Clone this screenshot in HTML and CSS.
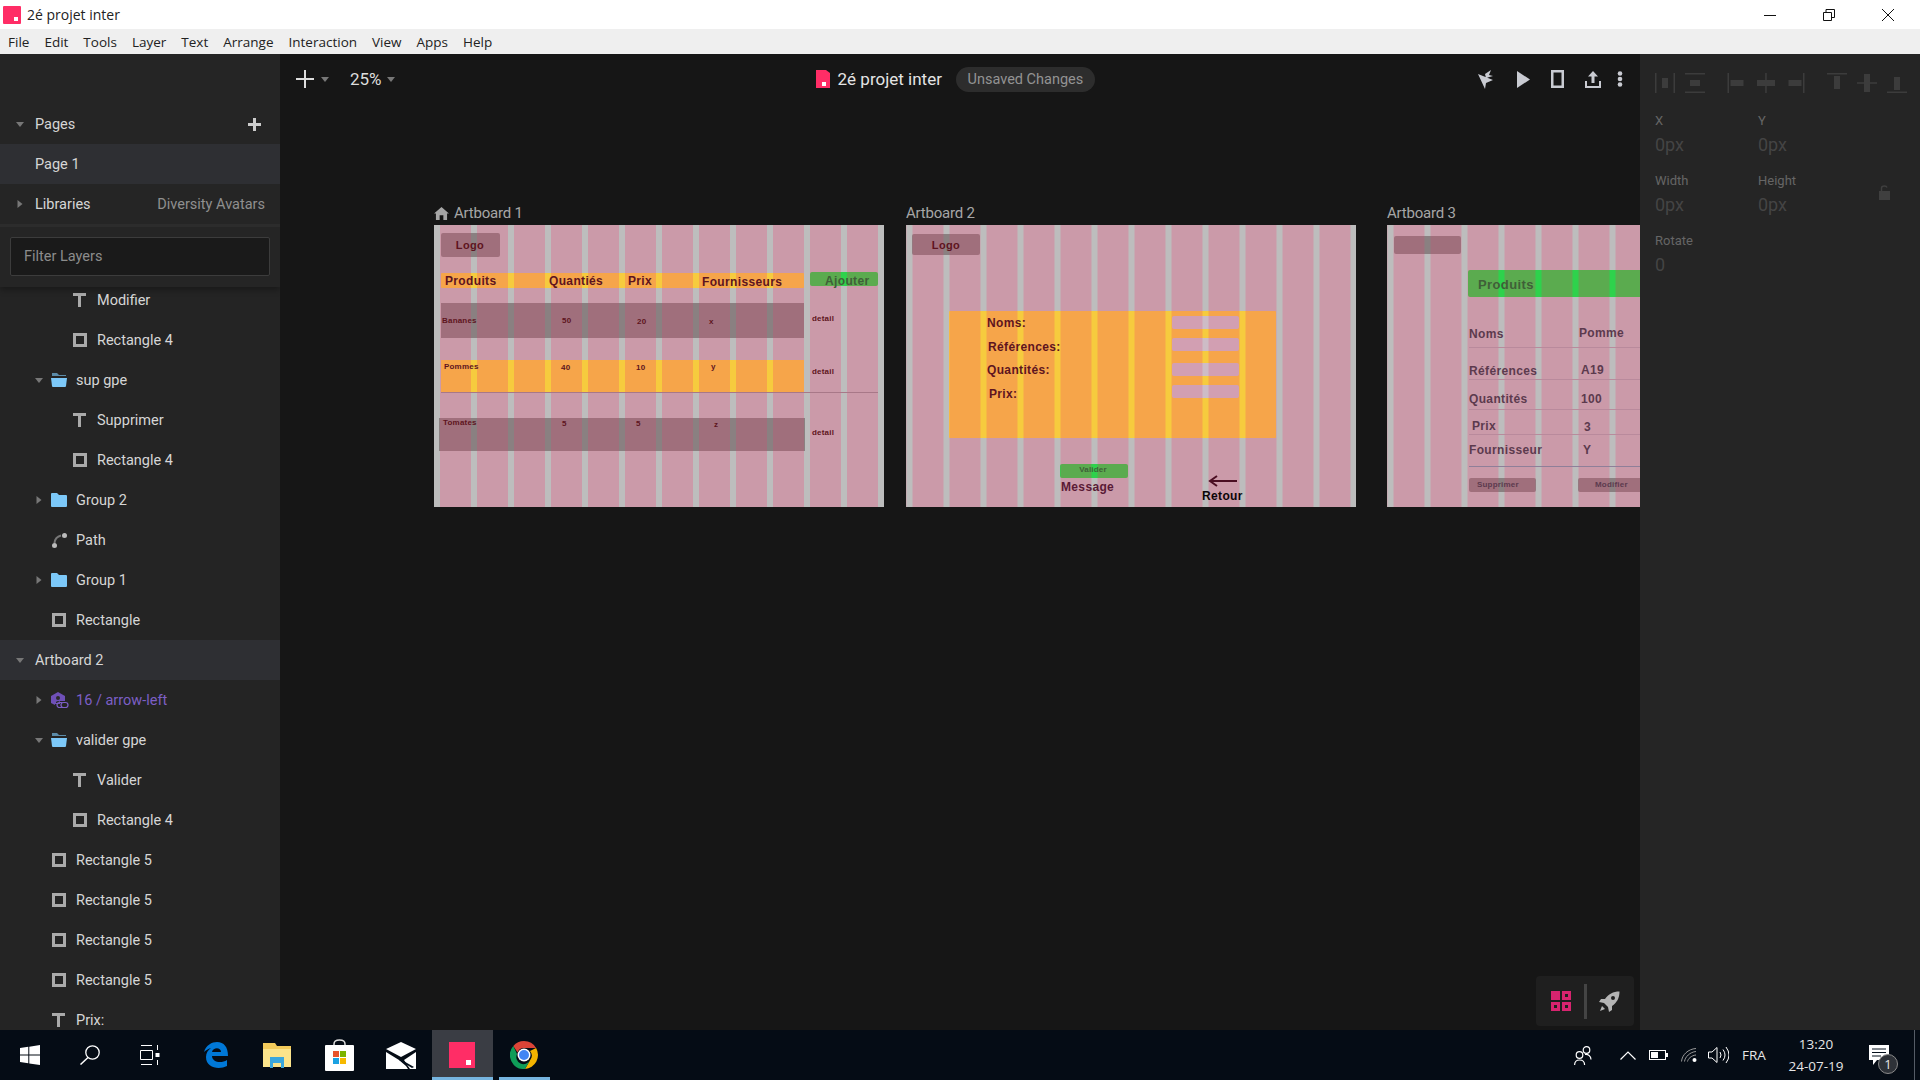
FILE: index.html
```html
<!DOCTYPE html>
<html lang="fr">
<head>
<meta charset="utf-8">
<title>2é projet inter</title>
<link rel="stylesheet" href="styles.css">
</head>
<body>
<svg class="defs" aria-hidden="true">
  <symbol id="t" viewBox="0 0 13 14"><path d="M0 0h13v3H8v11H5V3H0z"/></symbol>
  <symbol id="r" viewBox="0 0 14 14"><path fill-rule="evenodd" d="M0 0h14v14H0zM3 3v8h8V3z"/></symbol>
  <symbol id="fold" viewBox="0 0 16 14"><path d="M0 1q0-1 1-1h5l2 2h7q1 0 1 1v10q0 1-1 1H1q-1 0-1-1z"/></symbol>
  <symbol id="fopen" viewBox="0 0 16 14"><path fill="#5b8ba8" d="M1 0h5l2 2h7v1H1z"/><path d="M0 5h16l-1 8q0 1-1 1H2q-1 0-1-1z"/></symbol>
  <symbol id="down" viewBox="0 0 8 5"><path d="M0 0h8L4 5z"/></symbol>
  <symbol id="right" viewBox="0 0 5 8"><path d="M0 0l5 4-5 4z"/></symbol>
</svg>

<header class="titlebar">
  <svg class="applogo" viewBox="0 0 18 18"><rect width="18" height="18" rx="1" fill="#ff2d66"/><rect x="11" y="11" width="4" height="4" fill="#fff"/></svg>
  <span class="apptitle">2é projet inter</span>
  <div class="winctl">
    <svg viewBox="0 0 12 12"><path d="M0 6.500h12" stroke="#111" fill="none"/></svg>
    <svg viewBox="0 0 12 12"><path d="M.5 3.500h8v8h-8zM3 3.500V.5h8.500v8H8.500" stroke="#111" fill="none"/></svg>
    <svg viewBox="0 0 12 12"><path d="M0 0l12 12M12 0L0 12" stroke="#111" fill="none"/></svg>
  </div>
</header>
<nav class="menubar">
  <span>File</span><span>Edit</span><span>Tools</span><span>Layer</span><span>Text</span><span>Arrange</span><span>Interaction</span><span>View</span><span>Apps</span><span>Help</span>
</nav>

<div class="main">
  <aside class="sidebar">
    <div class="sidehead">
      <div class="row l0"><svg class="cv"><use href="#down"/></svg><span>Pages</span>
        <svg class="plus" viewBox="0 0 13 13"><path d="M5 0h3v5h5v3H8v5H5V8H0V5h5z"/></svg></div>
      <div class="row l0 sel"><i class="cv"></i><span>Page 1</span></div>
      <div class="row l0 libs"><svg class="cvr"><use href="#right"/></svg><span>Libraries</span><em>Diversity Avatars</em></div>
      <div class="filter"><div class="filterbox">Filter Layers</div></div>
    </div>
    <div class="layers">
      <div class="row l2"><svg class="ic t"><use href="#t"/></svg><span>Modifier</span></div>
      <div class="row l2"><svg class="ic r"><use href="#r"/></svg><span>Rectangle 4</span></div>
      <div class="row l1"><svg class="cv"><use href="#down"/></svg><svg class="ic f"><use href="#fopen"/></svg><span>sup gpe</span></div>
      <div class="row l2"><svg class="ic t"><use href="#t"/></svg><span>Supprimer</span></div>
      <div class="row l2"><svg class="ic r"><use href="#r"/></svg><span>Rectangle 4</span></div>
      <div class="row l1"><svg class="cvr"><use href="#right"/></svg><svg class="ic f"><use href="#fold"/></svg><span>Group 2</span></div>
      <div class="row l1"><i class="cv"></i><svg class="ic p" viewBox="0 0 15 15"><circle cx="12.500" cy="2.500" r="2.500" fill="#bbb"/><circle cx="2.500" cy="12.500" r="2.500" fill="#bbb"/><path d="M2.500 10Q3 4 9 2.500" stroke="#777" stroke-width="2" fill="none"/></svg><span>Path</span></div>
      <div class="row l1"><svg class="cvr"><use href="#right"/></svg><svg class="ic f"><use href="#fold"/></svg><span>Group 1</span></div>
      <div class="row l1"><i class="cv"></i><svg class="ic r"><use href="#r"/></svg><span>Rectangle</span></div>
      <div class="row l0 sel"><svg class="cv"><use href="#down"/></svg><span>Artboard 2</span></div>
      <div class="row l1 comp"><svg class="cvr"><use href="#right"/></svg><svg class="ic c" viewBox="0 0 18 17"><path fill="#6f50b8" d="M7 0l7 4v5H9v3H4v1L0 11V4z"/><circle cx="7" cy="6" r="2" fill="#2a2a2a"/><path d="M5 10q2-2 4 0v1H5z" fill="#2a2a2a"/><rect x="6" y="10.500" width="7" height="5" rx="2.500" fill="none" stroke="#7d5fc6" stroke-width="1.200"/><rect x="10" y="10.500" width="7" height="5" rx="2.500" fill="#242424" stroke="#7d5fc6" stroke-width="1.200"/></svg><span>16 / arrow-left</span></div>
      <div class="row l1"><svg class="cv"><use href="#down"/></svg><svg class="ic f"><use href="#fopen"/></svg><span>valider gpe</span></div>
      <div class="row l2"><svg class="ic t"><use href="#t"/></svg><span>Valider</span></div>
      <div class="row l2"><svg class="ic r"><use href="#r"/></svg><span>Rectangle 4</span></div>
      <div class="row l1"><i class="cv"></i><svg class="ic r"><use href="#r"/></svg><span>Rectangle 5</span></div>
      <div class="row l1"><i class="cv"></i><svg class="ic r"><use href="#r"/></svg><span>Rectangle 5</span></div>
      <div class="row l1"><i class="cv"></i><svg class="ic r"><use href="#r"/></svg><span>Rectangle 5</span></div>
      <div class="row l1"><i class="cv"></i><svg class="ic r"><use href="#r"/></svg><span>Rectangle 5</span></div>
      <div class="row l1"><i class="cv"></i><svg class="ic t"><use href="#t"/></svg><span>Prix:</span></div>
    </div>
  </aside>

  <section class="canvas">
    <div class="topbar">
      <svg class="addicon" viewBox="0 0 18 18"><path d="M8 0h2v8h8v2h-8v8H8v-8H0V8h8z"/></svg>
      <svg class="caret c1"><use href="#down"/></svg>
      <span class="zoom">25%</span>
      <svg class="caret c2"><use href="#down"/></svg>
      <svg class="doclogo" viewBox="0 0 14 18"><path fill="#ff2d66" d="M0 0h10l4 3v15H0z"/><rect x="6" y="12" width="4" height="4" fill="#fff"/></svg>
      <span class="docname">2é projet inter</span>
      <span class="pill">Unsaved Changes</span>
      <div class="actions">
        <svg class="a1" viewBox="0 0 16 19"><path d="M0 4l15 6-7 3-1 6zM7 4l6-4-2 5 4 1-7 2z"/></svg>
        <svg class="a2" viewBox="0 0 13 17"><path d="M0 0l13 8.500L0 17z"/></svg>
        <svg class="a3" viewBox="0 0 13 18"><path fill-rule="evenodd" d="M0 0h13v18H0zM2.500 2.500v13h8v-13z"/></svg>
        <svg class="a4" viewBox="0 0 16 17"><path d="M8 0l5 5.500h-3.500V12h-3V5.500H3zM0 10h2v5h12v-5h2v7H0z"/></svg>
        <svg class="a5" viewBox="0 0 6 16"><circle cx="3" cy="2.500" r="2.300"/><circle cx="3" cy="8" r="2.300"/><circle cx="3" cy="13.500" r="2.300"/></svg>
      </div>
    </div>

    <!-- Artboard 1 -->
    <div class="ablabel al1"><svg viewBox="0 0 16 14"><path d="M8 0l8 7h-2v7h-4V9H6v5H2V7H0z"/></svg>Artboard 1</div>
    <div class="board b1 g pink">
      <div class="el g dark a1logo"></div>
      <div class="el g orange a1head"></div>
      <div class="el g green a1add"></div>
      <div class="el g dark a1r1"></div>
      <div class="el g orange a1r2"></div>
      <div class="el a1line"></div>
      <div class="el g dark a1r3"></div>
      <span class="tx h11 cen" style="--x:36px;--y:20px">Logo</span>
      <span class="tx h12" style="--x:11px;--y:56px">Produits</span>
      <span class="tx h12" style="--x:115px;--y:56px">Quantiés</span>
      <span class="tx h12" style="--x:194px;--y:56px">Prix</span>
      <span class="tx h12" style="--x:268px;--y:57px">Fournisseurs</span>
      <span class="tx h12 dk" style="--x:391px;--y:56px">Ajouter</span>
      <span class="tx h8" style="--x:8px;--y:96px">Bananes</span>
      <span class="tx h8" style="--x:128px;--y:96px">50</span>
      <span class="tx h8" style="--x:203px;--y:97px">20</span>
      <span class="tx h8" style="--x:275px;--y:97px">x</span>
      <span class="tx h8" style="--x:378px;--y:94px">detail</span>
      <span class="tx h8" style="--x:10px;--y:142px">Pommes</span>
      <span class="tx h8" style="--x:127px;--y:143px">40</span>
      <span class="tx h8" style="--x:202px;--y:143px">10</span>
      <span class="tx h8" style="--x:277px;--y:142px">y</span>
      <span class="tx h8" style="--x:378px;--y:147px">detail</span>
      <span class="tx h8" style="--x:9px;--y:198px">Tomates</span>
      <span class="tx h8" style="--x:128px;--y:199px">5</span>
      <span class="tx h8" style="--x:202px;--y:199px">5</span>
      <span class="tx h8" style="--x:280px;--y:200px">z</span>
      <span class="tx h8" style="--x:378px;--y:208px">detail</span>
    </div>

    <!-- Artboard 2 -->
    <div class="ablabel al2">Artboard 2</div>
    <div class="board b2 g pink">
      <div class="el g dark a2logo"></div>
      <div class="el g orange a2panel"></div>
      <div class="el g inp a2i1"></div>
      <div class="el g inp a2i2"></div>
      <div class="el g inp a2i3"></div>
      <div class="el g inp a2i4"></div>
      <div class="el g green a2val"></div>
      <span class="tx h11 cen" style="--x:40px;--y:20px">Logo</span>
      <span class="tx h12" style="--x:81px;--y:98px">Noms:</span>
      <span class="tx h12" style="--x:82px;--y:122px">Références:</span>
      <span class="tx h12" style="--x:81px;--y:145px">Quantités:</span>
      <span class="tx h12" style="--x:83px;--y:169px">Prix:</span>
      <span class="tx h8 cen dk" style="--x:187px;--y:245px">Valider</span>
      <span class="tx h12 plum" style="--x:155px;--y:262px">Message</span>
      <svg class="a2arrow" viewBox="0 0 29 12"><path d="M29 6H3M9 1L2 6l7 5" fill="none" stroke="#4a0e22" stroke-width="2"/></svg>
      <span class="tx h12 blk" style="--x:296px;--y:271px">Retour</span>
    </div>

    <!-- Artboard 3 -->
    <div class="ablabel al3">Artboard 3</div>
    <div class="board b3 g pink">
      <div class="el g dark a3logo"></div>
      <div class="el g green a3head"></div>
      <div class="el a3line l1p"></div>
      <div class="el a3line l2p"></div>
      <div class="el a3line l3p"></div>
      <div class="el a3line l4p"></div>
      <div class="el a3line l5p"></div>
      <div class="el g dark a3b1"></div>
      <div class="el g dark a3b2"></div>
      <span class="tx h13 dk" style="--x:91px;--y:59px">Produits</span>
      <span class="tx h12 mut" style="--x:82px;--y:109px">Noms</span>
      <span class="tx h12 mut" style="--x:192px;--y:108px">Pomme</span>
      <span class="tx h12 mut" style="--x:82px;--y:146px">Références</span>
      <span class="tx h12 mut" style="--x:194px;--y:145px">A19</span>
      <span class="tx h12 mut" style="--x:82px;--y:174px">Quantités</span>
      <span class="tx h12 mut" style="--x:194px;--y:174px">100</span>
      <span class="tx h12 mut" style="--x:85px;--y:201px">Prix</span>
      <span class="tx h12 mut" style="--x:197px;--y:202px">3</span>
      <span class="tx h12 mut" style="--x:82px;--y:225px">Fournisseur</span>
      <span class="tx h12 mut" style="--x:196px;--y:225px">Y</span>
      <span class="tx h8 mut" style="--x:90px;--y:260px">Supprimer</span>
      <span class="tx h8 mut" style="--x:208px;--y:260px">Modifier</span>
    </div>

    <div class="floater">
      <svg class="gridicon" viewBox="0 0 20 20"><path fill="#d8246f" fill-rule="evenodd" d="M0 0h9v9H0zM11 0h9v9h-9zM14 3v3h3V3zM0 11h9v9H0zM3 14v3h3v-3zM11 11h9v9h-9zM14 14v3h3v-3z"/></svg>
      <i class="fsep"></i>
      <svg class="rocket" viewBox="0 0 21 21"><path fill="#b4b4b4" fill-rule="evenodd" d="M20.500.5C14 .5 9.500 3 6 8H2L0 11l5 1 4 4 1 5 3-2v-4c5-3.500 7.500-8 7.500-14.500zM14 5a2 2 0 1 1 0 4 2 2 0 0 1 0-4z"/><path fill="#b4b4b4" d="M3 15l3 3-5 2z"/></svg>
    </div>
  </section>

  <aside class="props">
    <div class="aligns">
      <svg viewBox="0 0 20 20"><path d="M0 0h1.500v20H0zM18.500 0H20v20h-1.500zM7 5h6v10H7z"/></svg>
      <svg viewBox="0 0 20 20"><path d="M0 0h20v1.500H0zM0 18.500h20V20H0zM5 7h10v6H5z"/></svg>
      <svg class="gapl" viewBox="0 0 17 20"><path d="M0 0h1.500v20H0zM3 7h13v6H3z"/></svg>
      <svg viewBox="0 0 18 20"><path d="M8.200 0h1.500v20H8.200zM0 7h18v6H0z"/></svg>
      <svg viewBox="0 0 17 20"><path d="M15.500 0H17v20h-1.500zM1 7h13v6H1z"/></svg>
      <svg class="gapl" viewBox="0 0 20 20"><path d="M0 0h20v1.500H0zM7 3h6v13H7z"/></svg>
      <svg viewBox="0 0 20 20"><path d="M0 9.200h20v1.500H0zM7 1h6v18H7z"/></svg>
      <svg viewBox="0 0 20 20"><path d="M0 18.500h20V20H0zM7 4h6v13H7z"/></svg>
    </div>
    <div class="fields">
      <div class="field"><label>X</label><b>0px</b></div>
      <div class="field"><label>Y</label><b>0px</b></div>
      <div class="field"><label>Width</label><b>0px</b></div>
      <div class="field"><label>Height</label><b>0px</b>
        <svg class="lock" viewBox="0 0 11 15"><path fill="#3f3f3f" d="M0 6h11v9H0z"/><path fill="none" stroke="#3f3f3f" stroke-width="1.500" d="M2.500 6V3q0-2 3-2 2 0 2.500 1.500"/></svg></div>
      <div class="field"><label>Rotate</label><b>0</b></div>
    </div>
  </aside>
</div>

<footer class="taskbar">
  <div class="tb sys"><svg class="i20" viewBox="0 0 20 20"><path fill="#fff" d="M0 3l8.300-1.200v7.800H0zM9.300 1.700L20 0v9.600H9.300zM0 10.500h8.300v7.800L0 17zM9.300 10.500H20V20L9.300 18.400z"/></svg></div>
  <div class="tb sys"><svg class="i20" viewBox="0 0 20 20"><circle cx="12.500" cy="7.500" r="6.700" fill="none" stroke="#fff" stroke-width="1.300"/><path d="M8 12.500L.5 19.500" stroke="#fff" stroke-width="1.500"/></svg></div>
  <div class="tb sys sysl"><svg class="i20" viewBox="0 0 20 20"><path d="M1 .5h11M1 19.500h11M.5 5.500h12v9H.5zM17.500 0v5M17.500 15v5" fill="none" stroke="#fff"/><rect x="15.500" y="8" width="4" height="4" fill="#fff"/></svg></div>
  <div class="tb app"><svg class="edge" viewBox="0 0 25 26"><path fill="#0078d7" d="M1 10C3 3 9 0 14 0c7 0 11 5 11 14H9c0 6 9 8 15 4v6c-8 4-21 2-21-9 0-4 2-7 5-9-3 1-5 2-7 4zM9 10h9c0-5-8-5-9 0z"/></svg></div>
  <div class="tb app"><svg class="explorer" viewBox="0 0 28 26"><path fill="#f3cb5b" d="M0 1h12l2 3h14v21H0z"/><path fill="#fbe48b" d="M0 7h28v18H0z"/><path fill="#3aa7dd" d="M7 15h14v11h-3v-5h-8v5H7z"/></svg></div>
  <div class="tb app"><svg class="store" viewBox="0 0 29 32"><path fill="none" stroke="#ddd" stroke-width="1.500" d="M9 8V5q0-4 5.500-4T20 5v3"/><rect y="6" width="29" height="26" rx="1" fill="#fff"/><rect x="8" y="12" width="6" height="6" fill="#e8542c"/><rect x="15" y="12" width="6" height="6" fill="#7bb300"/><rect x="8" y="19" width="6" height="6" fill="#1ba1e2"/><rect x="15" y="19" width="6" height="6" fill="#f6b900"/></svg></div>
  <div class="tb app"><svg class="mail" viewBox="0 0 30 27"><path fill="#fff" d="M0 7l15-7 15 7-15 8zM0 10l13 8 7 6 2 3H0zM30 10v17h-6l-6-9z"/><path fill="#05101c" d="M14 17l14 8-2 1-13-8z"/></svg></div>
  <div class="tb app on"><svg class="studio" viewBox="0 0 26 26"><rect width="26" height="26" fill="#ff2d66"/><rect x="17" y="18" width="5" height="5" fill="#fff"/></svg></div>
  <div class="tb app run"><svg class="chrome" viewBox="0 0 28 28"><path fill="#db4437" d="M14 0a14 14 0 0 1 12.100 7H14a7 7 0 0 0-6.500 4.400L3.300 5A14 14 0 0 1 14 0z"/><path fill="#f4b400" d="M26.100 7A14 14 0 0 1 15 28l5.500-9.500A7 7 0 0 0 20 10z"/><path fill="#0f9d58" d="M3.300 5A14 14 0 0 0 15 28l5-9a7 7 0 0 1-13-6z"/><circle cx="14" cy="14" r="6.500" fill="#fff"/><circle cx="14" cy="14" r="5" fill="#4285f4"/></svg></div>
  <div class="tray">
    <svg class="people" viewBox="0 0 18 19"><g fill="none" stroke="#fff" stroke-width="1.200"><circle cx="12.500" cy="4" r="3.300"/><circle cx="5.500" cy="9" r="3.300"/><path d="M.6 19c0-3 2-5 5-5s5 2 5 5M11 8.500c3-.5 6 1.500 6 5"/></g></svg>
    <svg class="chev" viewBox="0 0 16 9"><path d="M.5 8.500L8 1l7.500 7.500" fill="none" stroke="#fff" stroke-width="1.200"/></svg>
    <svg class="batt" viewBox="0 0 19 10"><rect x=".5" y=".5" width="16" height="9" fill="none" stroke="#fff"/><rect x="2" y="2" width="7" height="6" fill="#fff"/><rect x="17" y="3" width="2" height="4" fill="#fff"/></svg>
    <svg class="wifi" viewBox="0 0 16 14"><g fill="none" stroke="#999"><path d="M.5 13.500C1 7 7 1 15 .5M3.500 13.500C4 9 9 4 15 3.500"/><path d="M6.500 13.500C7 11 10 7.500 15 7"/></g><circle cx="13.500" cy="12" r="2" fill="#fff"/></svg>
    <svg class="vol" viewBox="0 0 21 18"><path d="M.5 6h3.500L9 1.500v15L4 12H.5zM12 6q2 3 0 6M15 3.500q4 5.500 0 11M18 1q6 8 0 16" fill="none" stroke="#fff"/></svg>
    <span class="lang">FRA</span>
    <div class="clock"><span>13:20</span><span>24-07-19</span></div>
    <div class="notif"><svg viewBox="0 0 20 20"><path fill="#fff" d="M0 0h20v15H8l-4 5v-5H0z"/><path d="M3 4h14M3 7.500h14M3 11h9" stroke="#05101c"/></svg><span class="badge">1</span></div>
    <i class="showdesk"></i>
  </div>
</footer>
</body>
</html>
```

FILE: styles.css
```css
* { box-sizing: border-box; }
html, body { margin: 0; height: 100%; overflow: hidden; }
body {
  display: flex; flex-direction: column; height: 100vh;
  font-family: Roboto, "Liberation Sans", sans-serif; color: #d6d6d6; background: #161616;
}
.defs { position: absolute; width: 0; height: 0; }

/* window chrome */
.titlebar { height: 29px; flex: none; background: #fff; display: flex; align-items: center; padding-left: 3px; }
.applogo { width: 18px; height: 18px; }
.apptitle { margin-left: 6px; font: 14px "Open Sans", sans-serif; color: #222; }
.winctl { margin-left: auto; display: flex; padding-right: 26px; gap: 47px; }
.winctl svg { width: 12px; height: 12px; }
.menubar { height: 25px; flex: none; background: #efefef; display: flex; align-items: center; gap: 15px; padding-left: 8px; font: 13.500px "Open Sans", sans-serif; color: #222; }

.main { flex: 1; min-height: 0; display: flex; }

/* left panel */
.sidebar { width: 280px; flex: none; background: #242424; display: flex; flex-direction: column; overflow: hidden; font-size: 14.500px; }
.sidehead { padding-top: 50px; background: #252525; position: relative; z-index: 1; box-shadow: 0 3px 6px rgba(0,0,0,.3); flex: none; }
.row { height: 40px; display: flex; align-items: center; flex: none; white-space: nowrap; }
.l0 { padding-left: 16px; }
.l0 .cv, .l0 .cvr { margin-right: 11px; }
.l1 { padding-left: 35px; }
.l1 .cv, .l1 .cvr { margin-right: 9px; }
.l2 { padding-left: 73px; }
.cv { width: 8px; height: 5px; fill: #777; flex: none; display: block; }
.cvr { width: 8px; height: 8px; fill: #777; flex: none; }
.ic { flex: none; margin-right: 10px; }
.ic.t { width: 13px; height: 14px; fill: #aaa; margin-right: 11px; }
.ic.r { width: 14px; height: 14px; fill: #aaa; }
.ic.f { width: 16px; height: 14px; fill: #7cc8f8; margin-right: 9px; margin-left: -1px; }
.ic.p { width: 15px; height: 15px; margin-right: 9px; }
.ic.c { width: 18px; height: 17px; margin-right: 7px; margin-left: -1px; }
.sel { background: #2e2f33; }
.plus { width: 13px; height: 13px; fill: #ccc; margin-left: auto; margin-right: 19px; }
.libs em { margin-left: auto; margin-right: 15px; font-style: normal; color: #8f8f8f; }
.filter { border-top: 3px solid #2c2c2c; padding: 10px 10px 11px; }
.filterbox { height: 39px; background: #1a1a1a; border: 1px solid #3c3c3c; border-radius: 2px; padding-left: 13px; line-height: 37px; color: #8c8c8c; }
.layers { margin-top: -7px; flex: none; }
.comp span { color: #7d5fc6; }

/* canvas */
.canvas { flex: 1; min-width: 0; position: relative; overflow: hidden; background: #161616; }
.topbar { height: 50px; display: flex; align-items: center; padding-left: 16px; }
.addicon { width: 18px; height: 18px; fill: #ddd; flex: none; }
.caret { width: 8px; height: 5px; fill: #777; flex: none; }
.c1 { margin-left: 7px; }
.c2 { margin-left: 5px; }
.zoom { margin-left: 21px; font-size: 17px; color: #ddd; }
.doclogo { width: 14px; height: 18px; margin-left: 421px; flex: none; }
.docname { margin-left: 8px; font-size: 17px; color: #e4e4e4; }
.pill { margin-left: 14px; height: 25px; width: 139px; border-radius: 13px; background: #2d2d2d; color: #939393; font-size: 14.500px; line-height: 25px; text-align: center; }
.actions { margin-left: auto; display: flex; align-items: center; padding-right: 17px; fill: #c9cbd2; }
.a1 { width: 16px; height: 19px; }
.a2 { width: 13px; height: 17px; margin-left: 23px; }
.a3 { width: 13px; height: 18px; margin-left: 21px; }
.a4 { width: 16px; height: 17px; margin-left: 21px; }
.a5 { width: 6px; height: 16px; margin-left: 16px; }

.ablabel { position: absolute; top: 150px; font-size: 15px; line-height: 18px; color: #a6a6a6; letter-spacing: -.2px; display: flex; align-items: center; gap: 5px; }
.ablabel svg { width: 15px; height: 13px; fill: #a6a6a6; }
.al1 { left: 154px; }
.al2 { left: 626px; }
.al3 { left: 1107px; }

/* the artboards sit on a free canvas; their grid overlay is aligned to the viewport */
.board { position: absolute; top: 171px; height: 282px; width: 450px; font-family: "Liberation Sans", Arial, sans-serif; color: #5e1420; }
.b1 { left: 154px; --off: 434px; }
.b2 { left: 626px; --off: 906.500px; }
.b3 { left: 1107px; --off: 1387.500px; }
.g {
  background-image: linear-gradient(90deg, var(--gut) 0 6.500px, var(--base) 6.500px 37px);
  background-size: 37px 100vh;
  background-position: var(--off) 0;
  background-attachment: fixed;
}
.pink { --base: #cb9aa9; --gut: #bdbdbd; }
.dark { --base: #a06f7c; --gut: #8a8081; }
.orange { --base: #f6a54a; --gut: #f6cb3e; }
.green { --base: #5bab4f; --gut: #2ed24c; }
.inp { --base: #d29fb2; --gut: #cdbcc6; }
.el { position: absolute; }
.tx { position: absolute; left: var(--x); top: var(--y); transform: translateY(-50%); white-space: nowrap; font-weight: 700; line-height: 1; }
.cen { transform: translate(-50%, -50%); }
.h8 { font-size: 8px; letter-spacing: .2px; }
.h11 { font-size: 11px; letter-spacing: .4px; }
.h12 { font-size: 12px; letter-spacing: .35px; }
.h13 { font-size: 13px; letter-spacing: .4px; }
.dk { color: #3f5f38; }
.plum { color: #5a1a36; }
.blk { color: #0c0508; }
.mut { color: #5c3a4e; }

.a1logo { left: 7px; top: 8px; width: 59px; height: 24px; border-radius: 2px; }
.a1head { left: 7px; top: 48px; width: 363px; height: 15px; border-radius: 1px; }
.a1add { left: 376px; top: 47px; width: 68px; height: 14px; border-radius: 2px; }
.a1r1 { left: 7px; top: 78px; width: 363px; height: 35px; }
.a1r2 { left: 7px; top: 135px; width: 363px; height: 32px; }
.a1line { left: 7px; top: 167px; width: 437px; height: 1px; background: #a87888; }
.a1r3 { left: 5px; top: 193px; width: 366px; height: 33px; }

.a2logo { left: 6px; top: 9px; width: 68px; height: 21px; border-radius: 2px; }
.a2panel { left: 43px; top: 86px; width: 327px; height: 127px; border-radius: 1px; }
.a2i1, .a2i2, .a2i3, .a2i4 { left: 266px; width: 67px; height: 13px; border-radius: 2px; }
.a2i1 { top: 91px; }
.a2i2 { top: 113px; }
.a2i3 { top: 138px; }
.a2i4 { top: 160px; }
.a2val { left: 154px; top: 239px; width: 68px; height: 14px; border-radius: 2px; }
.a2arrow { position: absolute; left: 302px; top: 250px; width: 29px; height: 12px; }

.a3logo { left: 7px; top: 11px; width: 67px; height: 18px; border-radius: 2px; }
.a3head { left: 81px; top: 45px; width: 369px; height: 27px; border-radius: 2px; }
.a3line { left: 82px; width: 368px; height: 1px; background: #b98a9c; }
.l1p { top: 122px; }
.l2p { top: 154px; }
.l3p { top: 184px; }
.l4p { top: 209px; }
.l5p { top: 241px; background: #8f7f99; }
.a3b1 { left: 82px; top: 253px; width: 67px; height: 14px; border-radius: 2px; }
.a3b2 { left: 191px; top: 253px; width: 67px; height: 14px; border-radius: 2px; }

.floater { position: absolute; right: 6px; bottom: 4px; width: 98px; height: 50px; background: #1f1f1f; border-radius: 4px; display: flex; align-items: center; padding-left: 15px; }
.gridicon { width: 20px; height: 20px; }
.fsep { width: 3px; height: 35px; background: #444; margin-left: 13px; }
.rocket { width: 21px; height: 21px; margin-left: 12px; }

/* right panel */
.props { width: 280px; flex: none; background: #252525; padding: 19px 15px 0; }
.aligns { display: flex; height: 21px; gap: 10px; fill: #3c3c3c; }
.aligns svg { width: 20px; height: 20px; flex: none; }
.aligns .gapl { margin-left: 11px; }
.fields { display: grid; grid-template-columns: 103px 1fr; grid-auto-rows: 60px; margin-top: 19px; }
.field { display: flex; flex-direction: column; gap: 4px; position: relative; }
.field label { font-size: 13px; line-height: 16px; color: #666; }
.field b { font-size: 18px; font-weight: 400; line-height: 24px; color: #444; }
.lock { position: absolute; right: 15px; top: 12px; width: 11px; height: 15px; }

/* taskbar */
.taskbar { height: 50px; flex: none; background: #050c15; display: flex; align-items: stretch; color: #e6e6e6; }
.tb { display: flex; align-items: center; justify-content: center; flex: none; position: relative; }
.sys { width: 60px; }
.sysl { margin-right: 5px; }
.app { width: 61.670px; }
.i20 { width: 20px; height: 20px; }
.edge { width: 25px; height: 26px; }
.explorer { width: 28px; height: 26px; }
.store { width: 29px; height: 32px; }
.mail { width: 30px; height: 27px; }
.studio { width: 26px; height: 26px; }
.chrome { width: 28px; height: 28px; }
.on { background: #3a3d44; box-shadow: inset 0 -3px 0 #76b5e0; }
.run::after { content: ""; position: absolute; left: 6px; right: 5px; bottom: 0; height: 3px; background: #76b5e0; }
.tray { margin-left: auto; display: flex; align-items: center; padding-right: 5px; font: 14px "Open Sans", sans-serif; }
.people { width: 18px; height: 19px; }
.chev { width: 16px; height: 9px; margin-left: 28px; }
.batt { width: 19px; height: 10px; margin-left: 13px; }
.wifi { width: 16px; height: 14px; margin-left: 13px; }
.vol { width: 21px; height: 18px; margin-left: 11px; }
.lang { margin-left: 13px; font-size: 13.500px; width: 26px; }
.clock { width: 60px; margin-left: 18px; display: flex; flex-direction: column; align-items: center; line-height: 22px; white-space: nowrap; font-size: 13.500px; }
.notif { position: relative; width: 30px; height: 20px; margin-left: 23px; }
.notif svg { width: 20px; height: 20px; }
.badge { position: absolute; left: 9px; top: 9px; width: 20px; height: 20px; border-radius: 50%; background: #2e3238; border: 1px solid #8a8a8a; text-align: center; line-height: 18px; font-size: 13px; }
.showdesk { width: 1px; align-self: stretch; background: #555c66; margin-left: 15px; }
```
